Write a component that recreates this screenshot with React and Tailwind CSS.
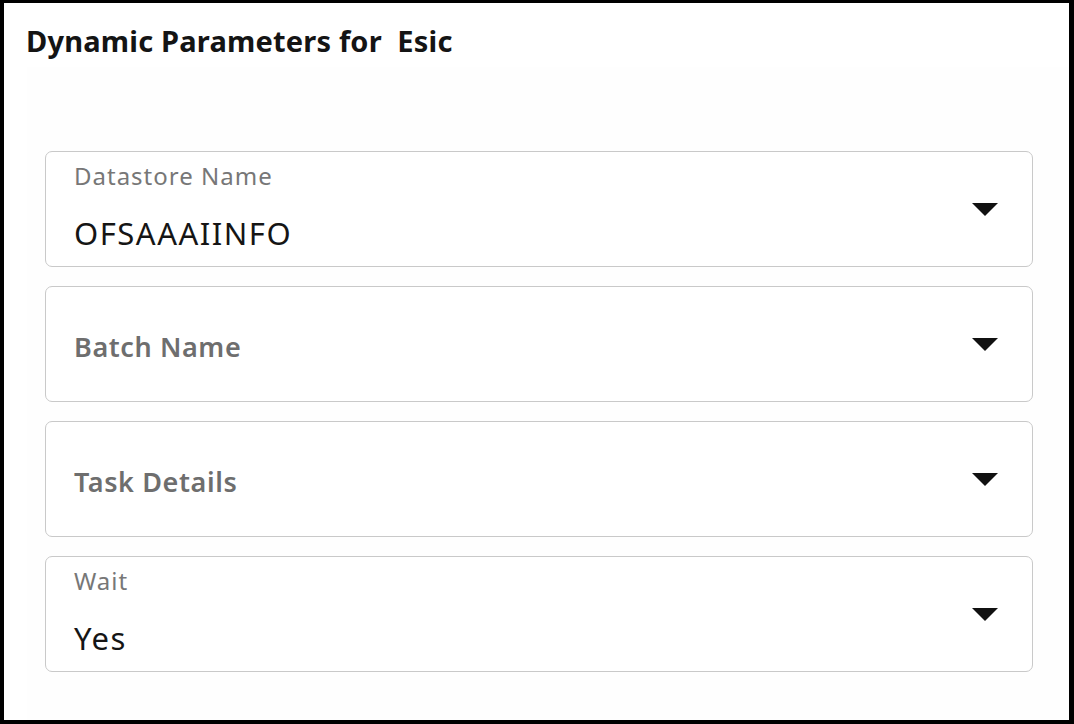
import React from 'react';

const Caret = () => (
  <svg width="26" height="13" viewBox="0 0 26 13" className="shrink-0">
    <polygon points="0,0 26,0 13,13" fill="#111" />
  </svg>
);

const SelectField = ({ label, value, placeholder }) => (
  <div className="h-[116px] border-[1.5px] border-[#c9c9c9] rounded-[7px] bg-white flex items-center pl-[28px] pr-[34px]">
    {value ? (
      <div className="flex-1 self-stretch flex flex-col pt-[9px]">
        <span className="text-[24px] leading-[30px] tracking-[1px] text-[#777777]">{label}</span>
        <span className="text-[31px] leading-[38px] tracking-[1.5px] text-[#151515] mt-[23px]">{value}</span>
      </div>
    ) : (
      <div className="flex-1 pt-[6px]">
        <span className="text-[27px] leading-[34px] tracking-[0.6px] text-[#6e6e6e] font-semibold">{placeholder}</span>
      </div>
    )}
    <Caret />
  </div>
);

const App = () => {
  const fields = [
    { label: 'Datastore Name', value: 'OFSAAAIINFO' },
    { placeholder: 'Batch Name' },
    { placeholder: 'Task Details' },
    { label: 'Wait', value: 'Yes' }
  ];

  return (
    <div
      className="w-[1074px] h-[724px] bg-black pt-[3px] pl-[4px] pr-[5px] pb-[4px]"
      style={{ fontFamily: '"Noto Sans", "Open Sans", sans-serif' }}
    >
      <div className="w-full h-full bg-white flex flex-col">
        <h1 className="text-[29px] font-bold text-[#141414] pl-[22px] pt-[20px] leading-[36px] tracking-[0.2px]">
          Dynamic Parameters for&nbsp; Esic
        </h1>
        <div className="flex-1 ml-[23px] mt-[8px] bg-[#fefefe] pt-[84px] pl-[18px] pr-[36px] flex flex-col gap-[19px]">
          {fields.map((f, i) => (
            <SelectField key={i} {...f} />
          ))}
        </div>
      </div>
    </div>
  );
};

export default App;
